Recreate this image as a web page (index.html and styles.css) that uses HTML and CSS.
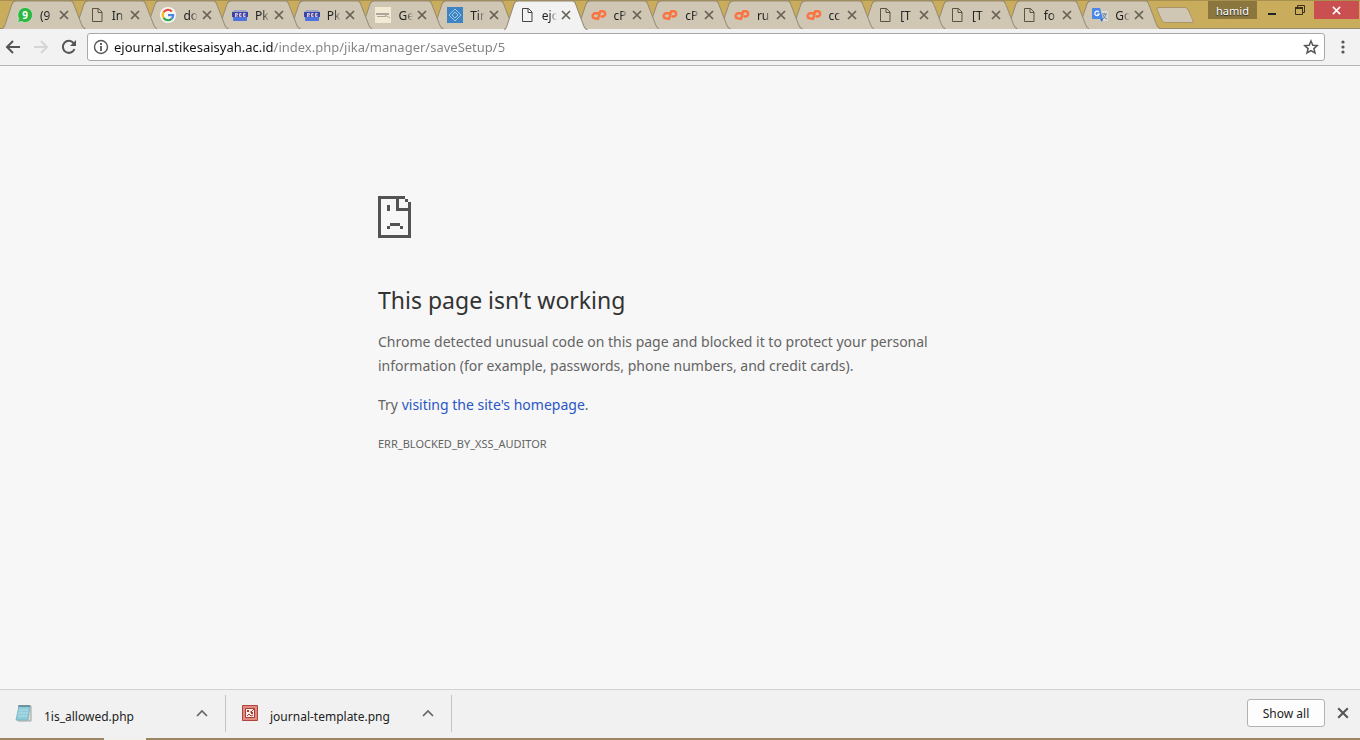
FILE: index.html
```
<!DOCTYPE html>
<html lang="en">
<head>
    <meta charset="UTF-8">
    <meta name="viewport" content="width=device-width, initial-scale=1.0">
    <title>ejournal.stikesaisyah.ac.id</title>
    <link rel="stylesheet" href="styles.css">
</head>
<body>
    <svg class="sprite" aria-hidden="true">
        <symbol id="shape" viewBox="0 0 84 28" preserveAspectRatio="none">
            <path d="M0 28C2 27 2 26 3 24L10 4Q11 1 14 1H69Q71 1 72 4L80 24Q81 27 84 28Z" stroke="none"/>
            <path d="M0 28C2 27 2 26 3 24L10 4Q11 1 14 1H69Q71 1 72 4L80 24Q81 27 84 28" fill="none"/>
        </symbol>
        <symbol id="close" viewBox="0 0 10 10">
            <path d="M1 1L9 9M9 1L1 9" fill="none" stroke="currentColor" stroke-width="1.700"/>
        </symbol>
        <symbol id="file" viewBox="0 0 16 16">
            <path d="M3.500 1.500H9.500L13 5V14.500H3.500ZM9 1.500V5.500H13" fill="none" stroke="currentColor"/>
        </symbol>
        <symbol id="whatsapp" viewBox="0 0 16 16">
            <path d="M8 .5a7.500 7.500 0 1 1-3.600 14L.5 15.500l1.300-3.700A7.500 7.500 0 0 1 8 .5z" fill="#2fb744" stroke="#e6eedc" stroke-width=".6"/>
            <text x="8" y="12" text-anchor="middle" font-size="10" font-weight="700" fill="#fff">9</text>
        </symbol>
        <symbol id="google" viewBox="0 0 16 16">
            <circle cx="8" cy="8" r="8" fill="#f8f8f5"/>
            <g fill="none" stroke-width="2.200">
                <path d="M3.600 5.200A5.200 5.200 0 0 1 11.800 4.400" stroke="#e5493a"/>
                <path d="M3.600 5.200A5.200 5.200 0 0 0 3.600 10.800" stroke="#f5b921"/>
                <path d="M3.600 10.800A5.200 5.200 0 0 0 11.500 11.900" stroke="#36a852"/>
                <path d="M8 8.200H13.200A5.200 5.200 0 0 1 11.500 11.900" stroke="#4a86e8"/>
            </g>
        </symbol>
        <symbol id="badge" viewBox="0 0 16 16">
            <path d="M2 3H14L16 6H0Z" fill="#a3a3c4"/>
            <path d="M0 5H16V10H0Z" fill="#3548a8"/>
            <path d="M1 10H15V13Q15 14 14 14H2Q1 14 1 13Z" fill="#4f73dc"/>
            <path d="M3.500 10V6.500H5.500V8H3.500L5.500 10M9.500 6.500H7.500V9.500H9.500M7.500 8H9.500M13.500 6.500H11.500V9.500H13.500M11.500 8H13.500" fill="none" stroke="#e8c3d0"/>
        </symbol>
        <symbol id="scan" viewBox="0 0 16 16">
            <path d="M0 0H16V16H0Z" fill="#f3ead4"/>
            <path d="M1 6H14V8H1ZM2 9H11V10H2Z" fill="#aaa69c"/>
            <path d="M10 8L15 11" stroke="#aaa69c"/>
        </symbol>
        <symbol id="diamond" viewBox="0 0 16 16">
            <path d="M0 0H16V16H0Z" fill="#3d84c4"/>
            <path d="M8 2L14 8L8 14L2 8ZM8 5L11 8L8 11L5 8Z" fill="none" stroke="#9dc6e6"/>
        </symbol>
        <symbol id="cpanel" viewBox="0 0 16 16">
            <g fill="none" stroke="#fa7340" stroke-width="2.400" stroke-linecap="round" stroke-linejoin="round">
                <path d="M7 6.200H4.300A2.600 2.600 0 0 0 4.300 11.500H5.500"/>
                <path d="M7 12L9.300 4.200H12A2.700 2.700 0 0 1 12 9.500H10.500"/>
            </g>
        </symbol>
        <symbol id="translate" viewBox="0 0 16 16">
            <path d="M6 4H16V14H9Z" fill="#dadad6"/>
            <path d="M1 1H8L11 12H1Q0 12 0 11V2Q0 1 1 1Z" fill="#4a88e8"/>
            <path d="M8 12H11L10 15Z" fill="#3563bd"/>
            <path d="M6.800 5A2.200 2.200 0 1 0 7.200 7H5.300" fill="none" stroke="#fff" stroke-width="1.200"/>
            <path d="M10 7H15M12.500 6V7M14 7Q13 10 11 12M11 8Q12 11 15 12" fill="none" stroke="#72828f"/>
        </symbol>
    </svg>

    <header class="titlebar">
        <nav class="tabs" id="tabs" aria-label="Tabs"></nav>
        <button class="new-tab" aria-label="New tab"></button>
        <div class="window-controls">
            <button class="profile">hamid</button>
            <button class="win-btn minimize" aria-label="Minimize">
                <svg width="12" height="12" viewBox="0 0 12 12"><path d="M2 10H10" stroke="#222" stroke-width="2"/></svg>
            </button>
            <button class="win-btn" aria-label="Restore">
                <svg width="12" height="12" viewBox="0 0 12 12"><path d="M3.500 3V1.500H10.500V8.500H9M1.500 3.500H8.500V10.500H1.500Z" fill="none" stroke="#3a301b"/><path d="M1 4H9" stroke="#3a301b" stroke-width="2"/></svg>
            </button>
            <button class="win-btn win-close" aria-label="Close">
                <svg width="9" height="9" viewBox="0 0 10 10"><use href="#close"/></svg>
            </button>
        </div>
    </header>

    <div class="toolbar">
        <button class="tool" aria-label="Back">
            <svg width="16" height="16" viewBox="0 0 16 16"><path d="M15 8H2M8 2L2 8L8 14" fill="none" stroke="#555" stroke-width="2"/></svg>
        </button>
        <button class="tool" aria-label="Forward" disabled>
            <svg width="16" height="16" viewBox="0 0 16 16"><path d="M1 8H14M8 2L14 8L8 14" fill="none" stroke="#d5d5d5" stroke-width="2"/></svg>
        </button>
        <button class="tool" aria-label="Reload">
            <svg width="16" height="16" viewBox="0 0 16 16"><path d="M13.500 10A6 6 0 1 1 12.500 4" fill="none" stroke="#555" stroke-width="2"/><path d="M15 1V7H9Z" fill="#555"/></svg>
        </button>
        <div class="omnibox">
            <svg width="16" height="16" viewBox="0 0 16 16"><circle cx="8" cy="8" r="6.500" fill="none" stroke="#555" stroke-width="1.400"/><path d="M8 7V12M8 4V6" stroke="#555" stroke-width="1.800"/></svg>
            <input class="url" type="text" aria-label="Address" value="ejournal.stikesaisyah.ac.id/index.php/jika/manager/saveSetup/5">
            <button class="star" aria-label="Bookmark this page">
                <svg width="16" height="16" viewBox="0 0 16 16"><path d="M8 2L9.800 6.200L14.300 6.600L10.900 9.600L12 14L8 11.600L4 14L5.100 9.600L1.700 6.600L6.200 6.200Z" fill="none" stroke="#555" stroke-width="1.500"/></svg>
            </button>
        </div>
        <button class="menu" aria-label="Menu">
            <svg width="4" height="14" viewBox="0 0 4 14"><g fill="#555"><circle cx="2" cy="2" r="1.600"/><circle cx="2" cy="7" r="1.600"/><circle cx="2" cy="12" r="1.600"/></g></svg>
        </button>
    </div>

    <main class="page">
        <div class="error">
            <svg class="sad-page" width="33" height="42" viewBox="0 0 33 42" shape-rendering="crispEdges" fill="#535353" aria-hidden="true">
                <path d="M0 0H27V3H21V12H30V6H33V42H0ZM3 3V39H30V15H18V3Z" fill-rule="evenodd"/>
                <path d="M27 3H30V6H27ZM9 9H12V15H9ZM12 27H22V30H12ZM9 30H12V33H9ZM22 30H25V33H22Z"/>
            </svg>
            <h1>This page isn’t working</h1>
            <p>Chrome detected unusual code on this page and blocked it to protect your personal information (for example, passwords, phone numbers, and credit cards).</p>
            <p>Try <a href="#">visiting the site's homepage</a>.</p>
            <div class="error-code">ERR_BLOCKED_BY_XSS_AUDITOR</div>
        </div>
    </main>

    <footer class="downloads">
        <div class="download">
            <svg width="18" height="18" viewBox="0 0 18 18">
                <path d="M5 2H16V17H3Z" fill="#e2dccb" stroke="#9aa5a3"/>
                <path d="M4 2H15L13 16H1Z" fill="#8fcbda" stroke="#74b0be" stroke-width=".8"/>
                <path d="M4 6H13M3 9H13M3 12H12" stroke="#b3dfe9"/>
                <path d="M4 1V3M6 1V3M8 1V3M10 1V3M12 1V3M14 1V3" stroke="#476970"/>
            </svg>
            <a class="file-name" href="#">1is_allowed.php</a>
            <button class="more" aria-label="Options for 1is_allowed.php">
                <svg width="12" height="8" viewBox="0 0 12 8"><path d="M1 7L6 2L11 7" fill="none" stroke="#666" stroke-width="1.700"/></svg>
            </button>
        </div>
        <div class="download">
            <svg width="18" height="18" viewBox="0 0 18 18">
                <path d="M1.500 1.500H16.500V16.500H1.500Z" fill="#e08a80" stroke="#b0453f"/>
                <path d="M4.500 4.500H13.500V13.500H4.500Z" fill="#fdf0ec" stroke="#a83c36"/>
                <path d="M6 12L8 10L10 12L12 11M9 8L10 8L13 5" fill="none" stroke="#a83c36"/>
                <path d="M6 6H8V8H6ZM10 8H12V10H10Z" fill="#a83c36"/>
            </svg>
            <a class="file-name" href="#">journal-template.png</a>
            <button class="more" aria-label="Options for journal-template.png">
                <svg width="12" height="8" viewBox="0 0 12 8"><path d="M1 7L6 2L11 7" fill="none" stroke="#666" stroke-width="1.700"/></svg>
            </button>
        </div>
        <button class="show-all">Show all</button>
        <button class="hide-bar" aria-label="Close downloads bar">
            <svg width="12" height="12" viewBox="0 0 10 10"><use href="#close"/></svg>
        </button>
    </footer>
    <div class="taskbar"></div>

    <script src="tabs.js"></script>
</body>
</html>
```
FILE: styles.css
```
:root {
    --frame: #c9ad5c;
    --tab: #cfc6b4;
    --tab-line: #958a72;
    --toolbar: #f2f2f2;
    --icon: #555;
}

* {
    box-sizing: border-box;
}

body {
    margin: 0;
    height: 100vh;
    display: flex;
    flex-direction: column;
    background: #f7f7f7;
    font-family: "Noto Sans", "Open Sans", sans-serif;
    font-size: 12px;
    overflow: hidden;
}

button {
    font: inherit;
    border: 0;
    padding: 0;
    background: none;
    color: var(--icon);
    display: flex;
    align-items: center;
    justify-content: center;
}

svg {
    flex: none;
    display: block;
}

.sprite {
    position: absolute;
    width: 0;
    height: 0;
}

/* tab strip */
.titlebar {
    flex: none;
    display: flex;
    height: 29px;
    background: var(--frame);
    border-top: 1px solid #a89050;
    border-bottom: 1px solid var(--tab-line);
}

.tabs {
    flex: 0 1 1161px;
    min-width: 0;
    display: flex;
    padding: 0 12px 0 2px;
}

.tab {
    flex: 1;
    min-width: 0;
    position: relative;
    display: flex;
    align-items: center;
    padding: 0 5px 0 15px;
    height: 28px;
    color: #5b5240;
}

.tab-shape {
    position: absolute;
    top: -1px;
    left: 0;
    width: calc(100% + 12px);
    height: 29px;
    fill: var(--tab);
    stroke: var(--tab-line);
}

.tab.active {
    color: #444;
}

.tab.active .tab-shape {
    fill: var(--toolbar);
    height: 30px;
}

.favicon {
    position: relative;
    width: 16px;
    height: 16px;
}

.tab-title {
    position: relative;
    flex: 1;
    min-width: 0;
    margin: 0 4px 0 7px;
    white-space: nowrap;
    color: #222;
    -webkit-mask-image: linear-gradient(to right, #000 50%, transparent);
    mask-image: linear-gradient(to right, #000 50%, transparent);
}

.tab-close {
    position: relative;
    color: #666055;
}

.new-tab {
    width: 32px;
    height: 16px;
    margin: 6px 0 0 -2px;
    background: var(--tab);
    border: 1px solid #a8966a;
    border-radius: 3px;
    transform: skewX(24deg);
}

.window-controls {
    display: flex;
    align-items: flex-start;
    margin-left: auto;
    padding-right: 1px;
}

.profile {
    width: 49px;
    height: 18px;
    background: #8b763e;
    color: #fff;
    font-size: 11px;
    text-shadow: 0 1px 1px #222;
}

.win-btn {
    width: 26px;
    height: 18px;
}

.minimize {
    width: 30px;
}

.win-close {
    width: 45px;
    margin-left: 1px;
    background: #c94f50;
    color: #fff;
}

/* toolbar */
.toolbar {
    flex: none;
    display: flex;
    align-items: center;
    height: 37px;
    padding: 0 15px 0 5px;
    background: var(--toolbar);
    border-bottom: 1px solid #b5b5b5;
}

.tool {
    width: 16px;
    margin-right: 12px;
}

.omnibox {
    flex: 1;
    min-width: 0;
    display: flex;
    align-items: center;
    height: 28px;
    margin: 0 16px 0 -2px;
    padding: 0 5px;
    background: #fff;
    border: 1px solid #a9a9a9;
    border-radius: 3px;
}

.url {
    flex: 1;
    min-width: 0;
    height: 24px;
    margin: 0 5px;
    padding: 0;
    border: 0;
    outline: 0;
    font: inherit;
    font-size: 13px;
    color: #222;
    /* host is dark, the path after it is grey */
    background: linear-gradient(to right, #111 159px, #808080 159px);
    -webkit-background-clip: text;
    background-clip: text;
    -webkit-text-fill-color: transparent;
}

/* error page */
.page {
    flex: 1;
    min-height: 0;
    overflow: auto;
    padding: 130px 16px 0;
}

.error {
    max-width: 604px;
    margin: 0 auto;
    color: #646464;
    font-size: 14px;
    line-height: 24px;
}

.error h1 {
    margin: 45px 0 13px;
    color: #333;
    font-size: 23px;
    font-weight: 400;
    line-height: 34px;
}

.error p {
    margin: 0 0 15px;
}

.error a {
    color: #2a56c6;
    text-decoration: none;
}

.error-code {
    font-size: 11px;
}

/* downloads */
.downloads {
    flex: none;
    display: flex;
    align-items: center;
    height: 49px;
    padding: 0 11px 2px 0;
    background: #f1f1f1;
    border-top: 1px solid #d2d2d2;
}

.download {
    display: flex;
    align-items: center;
    width: 226px;
    height: 37px;
    padding: 0 17px 0 15px;
    border-right: 1px solid #c4c4c4;
}

.file-name {
    flex: 1;
    margin-left: 11px;
    padding-top: 6px;
    color: #222;
    text-decoration: none;
}

.show-all {
    width: 78px;
    height: 28px;
    margin-left: auto;
    background: #fdfdfd;
    border: 1px solid #b2b2b2;
    border-radius: 3px;
    color: #222;
}

.hide-bar {
    margin-left: 12px;
}

.taskbar {
    flex: none;
    height: 2px;
    background: linear-gradient(to right, #9a8663 104px, #f2f0ea 104px, #f2f0ea 146px, #9a8663 146px);
}
```
FILE: tabs.js
```
const tabs = [
    ['whatsapp', '(9'],
    ['file', 'In'],
    ['google', 'do'],
    ['badge', 'Pk'],
    ['badge', 'Pk'],
    ['scan', 'Ge'],
    ['diamond', 'Tir'],
    ['file', 'ejo'],
    ['cpanel', 'cP'],
    ['cpanel', 'cP'],
    ['cpanel', 'ru'],
    ['cpanel', 'cc'],
    ['file', '[T'],
    ['file', '[T'],
    ['file', 'fo'],
    ['translate', 'Go']
];
const activeTab = 7;

document.getElementById('tabs').innerHTML = tabs.map(([icon, title], i) => `
    <div class="tab ${i === activeTab ? 'active' : ''}" style="z-index: ${i === activeTab ? 20 : 16 - i}">
        <svg class="tab-shape"><use href="#shape"/></svg>
        <svg class="favicon"><use href="#${icon}"/></svg>
        <span class="tab-title">${title}</span>
        <button class="tab-close" aria-label="Close tab"><svg width="10" height="10"><use href="#close"/></svg></button>
    </div>`).join('');
```
